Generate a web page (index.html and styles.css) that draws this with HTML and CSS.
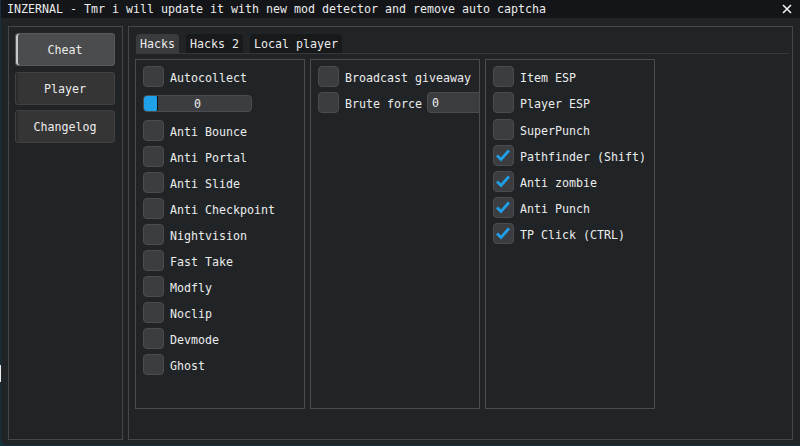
FILE: index.html
```html
<!DOCTYPE html>
<html>
<head>
<meta charset="utf-8">
<link rel="stylesheet" href="styles.css">
</head>
<body>
<div class="window">
  <div class="titlebar">
    <span class="title">INZERNAL - Tmr i will update it with new mod detector and remove auto captcha</span>
    <svg class="close" width="10" height="10" viewBox="0 0 10 10"><path d="M1 1 L9 9 M9 1 L1 9" stroke="#f0f0f0" stroke-width="1.6" fill="none"/></svg>
  </div>
  <div class="body">
    <div class="sidebar">
      <div class="navbtn active">Cheat</div>
      <div class="navbtn">Player</div>
      <div class="navbtn">Changelog</div>
    </div>
    <div class="main">
      <div class="tabs">
        <div class="tab active">Hacks</div>
        <div class="tab">Hacks 2</div>
        <div class="tab">Local player</div>
      </div>
      <div class="tabline"></div>
      <div class="columns">
        <div class="col">
          <div class="row"><span class="cb"></span><span class="lbl">Autocollect</span></div>
          <div class="slider"><span class="grab"></span><span class="val">0</span></div>
          <div class="row"><span class="cb"></span><span class="lbl">Anti Bounce</span></div>
          <div class="row"><span class="cb"></span><span class="lbl">Anti Portal</span></div>
          <div class="row"><span class="cb"></span><span class="lbl">Anti Slide</span></div>
          <div class="row"><span class="cb"></span><span class="lbl">Anti Checkpoint</span></div>
          <div class="row"><span class="cb"></span><span class="lbl">Nightvision</span></div>
          <div class="row"><span class="cb"></span><span class="lbl">Fast Take</span></div>
          <div class="row"><span class="cb"></span><span class="lbl">Modfly</span></div>
          <div class="row"><span class="cb"></span><span class="lbl">Noclip</span></div>
          <div class="row"><span class="cb"></span><span class="lbl">Devmode</span></div>
          <div class="row"><span class="cb"></span><span class="lbl">Ghost</span></div>
        </div>
        <div class="col">
          <div class="row"><span class="cb"></span><span class="lbl">Broadcast giveaway</span></div>
          <div class="row"><span class="cb"></span><span class="lbl">Brute force</span><span class="input">0</span></div>
        </div>
        <div class="col">
          <div class="row"><span class="cb"></span><span class="lbl">Item ESP</span></div>
          <div class="row"><span class="cb"></span><span class="lbl">Player ESP</span></div>
          <div class="row extra"><span class="cb"></span><span class="lbl">SuperPunch</span></div>
          <div class="row"><span class="cb"><svg viewBox="0 0 21 21" width="21" height="21"><polyline points="4,10.5 8,14.5 16,5.5" fill="none" stroke="#1f9fe9" stroke-width="2.8"/></svg></span><span class="lbl">Pathfinder (Shift)</span></div>
          <div class="row"><span class="cb"><svg viewBox="0 0 21 21" width="21" height="21"><polyline points="4,10.5 8,14.5 16,5.5" fill="none" stroke="#1f9fe9" stroke-width="2.8"/></svg></span><span class="lbl">Anti zombie</span></div>
          <div class="row"><span class="cb"><svg viewBox="0 0 21 21" width="21" height="21"><polyline points="4,10.5 8,14.5 16,5.5" fill="none" stroke="#1f9fe9" stroke-width="2.8"/></svg></span><span class="lbl">Anti Punch</span></div>
          <div class="row"><span class="cb"><svg viewBox="0 0 21 21" width="21" height="21"><polyline points="4,10.5 8,14.5 16,5.5" fill="none" stroke="#1f9fe9" stroke-width="2.8"/></svg></span><span class="lbl">TP Click (CTRL)</span></div>
        </div>
      </div>
    </div>
  </div>
</div>
</body>
</html>
```

FILE: styles.css
```css
html, body {
  margin: 0;
  padding: 0;
}
body {
  width: 800px;
  height: 446px;
  overflow: hidden;
  background: linear-gradient(to bottom, #17303e 0, #17303e 365px, #e8ecef 365px, #e8ecef 382px, #17303e 382px);
  font-family: "DejaVu Sans Mono", "Liberation Mono", monospace;
  font-size: 11.63px;
  color: #ececec;
}
.window {
  margin-left: 1px;
  width: 799px;
  height: 445px;
  background: #212427;
  border-bottom-left-radius: 6px;
  overflow: hidden;
  display: flex;
  flex-direction: column;
}
.titlebar {
  height: 18px;
  flex-shrink: 0;
  background: #131518;
  display: flex;
  align-items: center;
  justify-content: space-between;
  padding: 0 8px 0 6px;
  box-sizing: border-box;
}
.title {
  line-height: 18px;
  white-space: nowrap;
}
.close {
  display: block;
}
.body {
  display: flex;
  gap: 5px;
  padding: 8px 7px 0 7px;
}
.sidebar {
  width: 115px;
  height: 414px;
  box-sizing: border-box;
  border: 1px solid #45474b;
  padding: 6px;
  display: flex;
  flex-direction: column;
  gap: 5px;
}
.navbtn {
  width: 100px;
  height: 33px;
  box-sizing: border-box;
  background: #353536;
  border: 1px solid #404143;
  border-radius: 3px;
  box-shadow: inset 2px 0 0 #2b2b2c;
  display: flex;
  align-items: center;
  justify-content: center;
  flex-shrink: 0;
}
.navbtn.active {
  background: #4b4c4e;
  border-color: #58595c;
  box-shadow: inset 2px 0 0 #c8c8c8;
  margin-bottom: 1px;
}
.main {
  width: 665px;
  height: 414px;
  box-sizing: border-box;
  border: 1px solid #45474b;
  padding: 7px 3px 0 6px;
}
.tabs {
  display: flex;
  gap: 7px;
  margin-left: 1px;
  height: 19px;
}
.tab {
  height: 19px;
  box-sizing: border-box;
  padding: 1px 4px 0;
  line-height: 18px;
  background: #17191b;
  border-radius: 4px 4px 0 0;
  white-space: nowrap;
}
.tab.active {
  background: #3a3b3d;
}
.tabline {
  height: 1px;
  background: #35373b;
  margin-left: 1px;
}
.columns {
  display: flex;
  gap: 5px;
  margin-top: 5px;
}
.col {
  width: 170px;
  height: 350px;
  box-sizing: border-box;
  border: 1px solid #4a4c50;
  padding: 6px 7px;
  overflow: hidden;
  display: flex;
  flex-direction: column;
  gap: 5px;
}
.row {
  display: flex;
  align-items: center;
  height: 21px;
  gap: 6px;
  white-space: nowrap;
  flex-shrink: 0;
}
.row.extra {
  margin-top: 1px;
}
.lbl {
  padding-top: 2px;
}
.cb {
  width: 21px;
  height: 21px;
  box-sizing: border-box;
  background: #3c3d40;
  border: 1px solid #4b4c50;
  border-radius: 4px;
  flex-shrink: 0;
  display: flex;
  align-items: center;
  justify-content: center;
}
.cb svg {
  display: block;
  flex-shrink: 0;
}
.slider {
  width: 109px;
  height: 17px;
  box-sizing: border-box;
  margin: 3px 0;
  background: #3c3d40;
  border: 1px solid #4b4c50;
  border-radius: 4px;
  display: grid;
  flex-shrink: 0;
  overflow: hidden;
}
.grab {
  grid-area: 1 / 1;
  justify-self: start;
  width: 15px;
  height: 17px;
  margin: -1px 0 0 -1px;
  box-sizing: border-box;
  background: #1fa1ea;
  border: 1px solid #0c0e10;
  border-radius: 2px;
}
.val {
  grid-area: 1 / 1;
  justify-self: center;
  align-self: center;
  line-height: 15px;
  padding-top: 1px;
}
.input {
  width: 80px;
  height: 21px;
  box-sizing: border-box;
  flex-shrink: 0;
  margin-left: -1px;
  background: #3b3c3f;
  border: 1px solid #4b4c50;
  border-radius: 4px;
  padding: 1px 0 0 4px;
  line-height: 18px;
}
```
